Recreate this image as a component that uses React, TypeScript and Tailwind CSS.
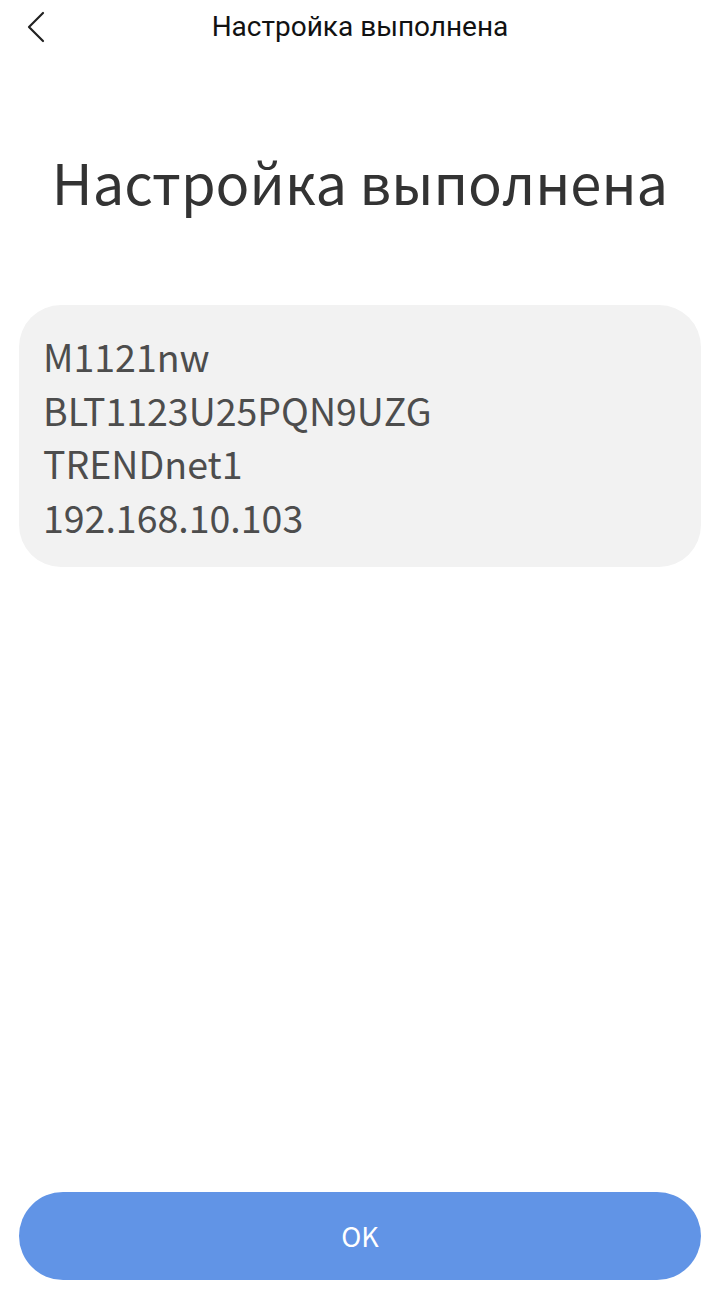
export default function App() {
  const info = ["M1121nw", "BLT1123U25PQN9UZG", "TRENDnet1", "192.168.10.103"];

  return (
    <div className="w-[720px] h-[1290px] bg-white flex flex-col" style={{ fontFamily: '"Noto Sans CJK SC", "Noto Sans", sans-serif' }}>
      <div className="relative h-[54px] flex items-center justify-center">
        <button className="absolute left-[22px] top-[10px] w-[28px] h-[34px] flex items-center justify-center">
          <svg width="20" height="32" viewBox="0 0 20 32" fill="none" stroke="#222" strokeWidth="2.2" strokeLinecap="round" strokeLinejoin="round">
            <path d="M17 2 L3 16 L17 30" />
          </svg>
        </button>
        <h1 className="text-[28px] text-[#111] leading-none" style={{ fontFamily: 'Roboto, sans-serif' }}>Настройка выполнена</h1>
      </div>

      <h2 className="mt-[99px] text-center text-[56px] leading-none text-[#333]">Настройка выполнена</h2>

      <div className="mx-[19px] mt-[96px] bg-[#f2f2f2] rounded-[42px] px-[24px] pt-[24px] pb-[24px] flex flex-col">
        {info.map((line) => (
          <div key={line} className="text-[37.5px] leading-[53.5px] text-[#4d4d4d]">{line}</div>
        ))}
      </div>

      <div className="flex-1" />

      <button className="mx-[19px] mb-[10px] h-[88px] rounded-full bg-[#6194e6] text-white text-[27px] flex items-center justify-center">
        OK
      </button>
    </div>
  );
}
